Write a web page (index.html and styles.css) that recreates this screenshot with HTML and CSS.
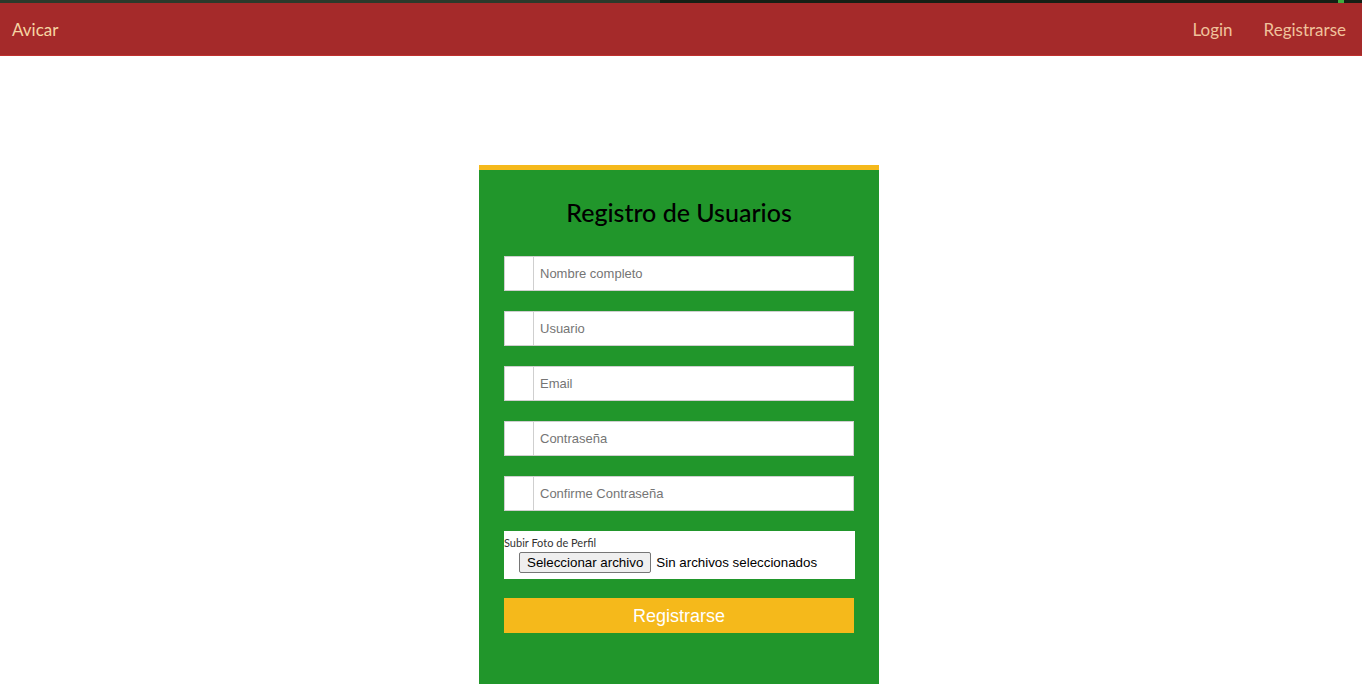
FILE: index.html
```html
<!DOCTYPE html>
<html lang="es">
<head>
<meta charset="utf-8">
<title>Avicar - Registro</title>
<link rel="stylesheet" href="styles.css">
</head>
<body>
<div class="topstrip"><span class="seg-a"></span><span class="seg-b"></span><span class="seg-c"></span><span class="seg-d"></span></div>
<nav class="navbar">
  <a class="brand" href="#">Avicar</a>
  <div class="links">
    <a href="#">Login</a>
    <a href="#">Registrarse</a>
  </div>
</nav>
<main class="main">
  <form class="card">
    <h1 class="title">Registro de Usuarios</h1>
    <div class="field"><span class="addon"></span><input type="text" placeholder="Nombre completo"></div>
    <div class="field"><span class="addon"></span><input type="text" placeholder="Usuario"></div>
    <div class="field"><span class="addon"></span><input type="email" placeholder="Email"></div>
    <div class="field"><span class="addon"></span><input type="password" placeholder="Contraseña"></div>
    <div class="field"><span class="addon"></span><input type="password" placeholder="Confirme Contraseña"></div>
    <div class="filebox">
      <label class="filelabel">Subir Foto de Perfil</label>
      <div class="filerow"><button type="button" class="filebtn">Seleccionar archivo</button><span class="filetext">Sin archivos seleccionados</span></div>
    </div>
    <button type="button" class="submit">Registrarse</button>
  </form>
</main>
</body>
</html>
```
FILE: styles.css
```css
* { box-sizing: border-box; }
html, body { margin: 0; padding: 0; background: #fff; }
body { font-family: Lato, "Noto Sans", sans-serif; overflow: hidden; height: 684px; }
.topstrip { display: flex; height: 3px; background: #152015; }
.seg-a { width: 660px; background: #2b3a2b; }
.seg-b { flex: 1; }
.seg-c { width: 6px; background: #3fae3f; }
.seg-d { width: 18px; }
.navbar {
  height: 53px;
  background: #a52a2a;
  border-bottom: 1px solid #c0302e;
  display: flex;
  align-items: center;
  justify-content: space-between;
  padding: 0 16px 0 12px;
}
.brand { color: #f6d5a3; text-decoration: none; font-size: 17px; font-weight: 400; }
.links { display: flex; gap: 31px; }
.links a { color: #f0c29c; text-decoration: none; font-size: 17px; }
.main { display: flex; justify-content: center; padding-top: 109px; padding-right: 4px; }
.card {
  width: 400px;
  background: #21962b;
  border-top: 5px solid #f5b91b;
  padding: 25px 25px 60px;
  display: flex;
  flex-direction: column;
  align-items: stretch;
}
.title { margin: 0 0 27px; text-align: center; font-size: 25px; font-weight: 500; color: #000; line-height: 34px; }
.field {
  display: flex;
  height: 35px;
  margin-bottom: 20px;
  background: #fff;
  border: 1px solid #cfcfcf;
}
.addon { width: 29px; border-right: 1px solid #cfcfcf; }
.field input {
  flex: 1;
  border: 0;
  outline: none;
  padding: 0 6px;
  font-family: "Liberation Sans", Arial, sans-serif;
  font-size: 13px;
  color: #333;
  background: #fff;
}
.field input::placeholder { color: #757575; }
.filebox {
  background: #fff;
  height: 48px;
  width: 351px;
  padding-top: 5px;
  margin-bottom: 19px;
}
.filelabel { display: block; font-size: 11px; color: #333; line-height: 13px; }
.filerow { display: flex; align-items: center; padding-left: 15px; margin-top: 3px; }
.filebtn {
  font-family: "Liberation Sans", Arial, sans-serif;
  font-size: 13.33px;
  background: #efefef;
  border: 1px solid #767676;
  border-radius: 2px;
  color: #000;
  padding: 1px 7px;
  height: 21px;
}
.filetext { font-family: "Liberation Sans", Arial, sans-serif; font-size: 13.33px; color: #000; margin-left: 5px; }
.submit {
  height: 35px;
  background: #f5b91b;
  border: 0;
  color: #fff;
  padding-top: 2px;
  font-family: "Liberation Sans", Arial, sans-serif;
  font-size: 18px;
}
```
